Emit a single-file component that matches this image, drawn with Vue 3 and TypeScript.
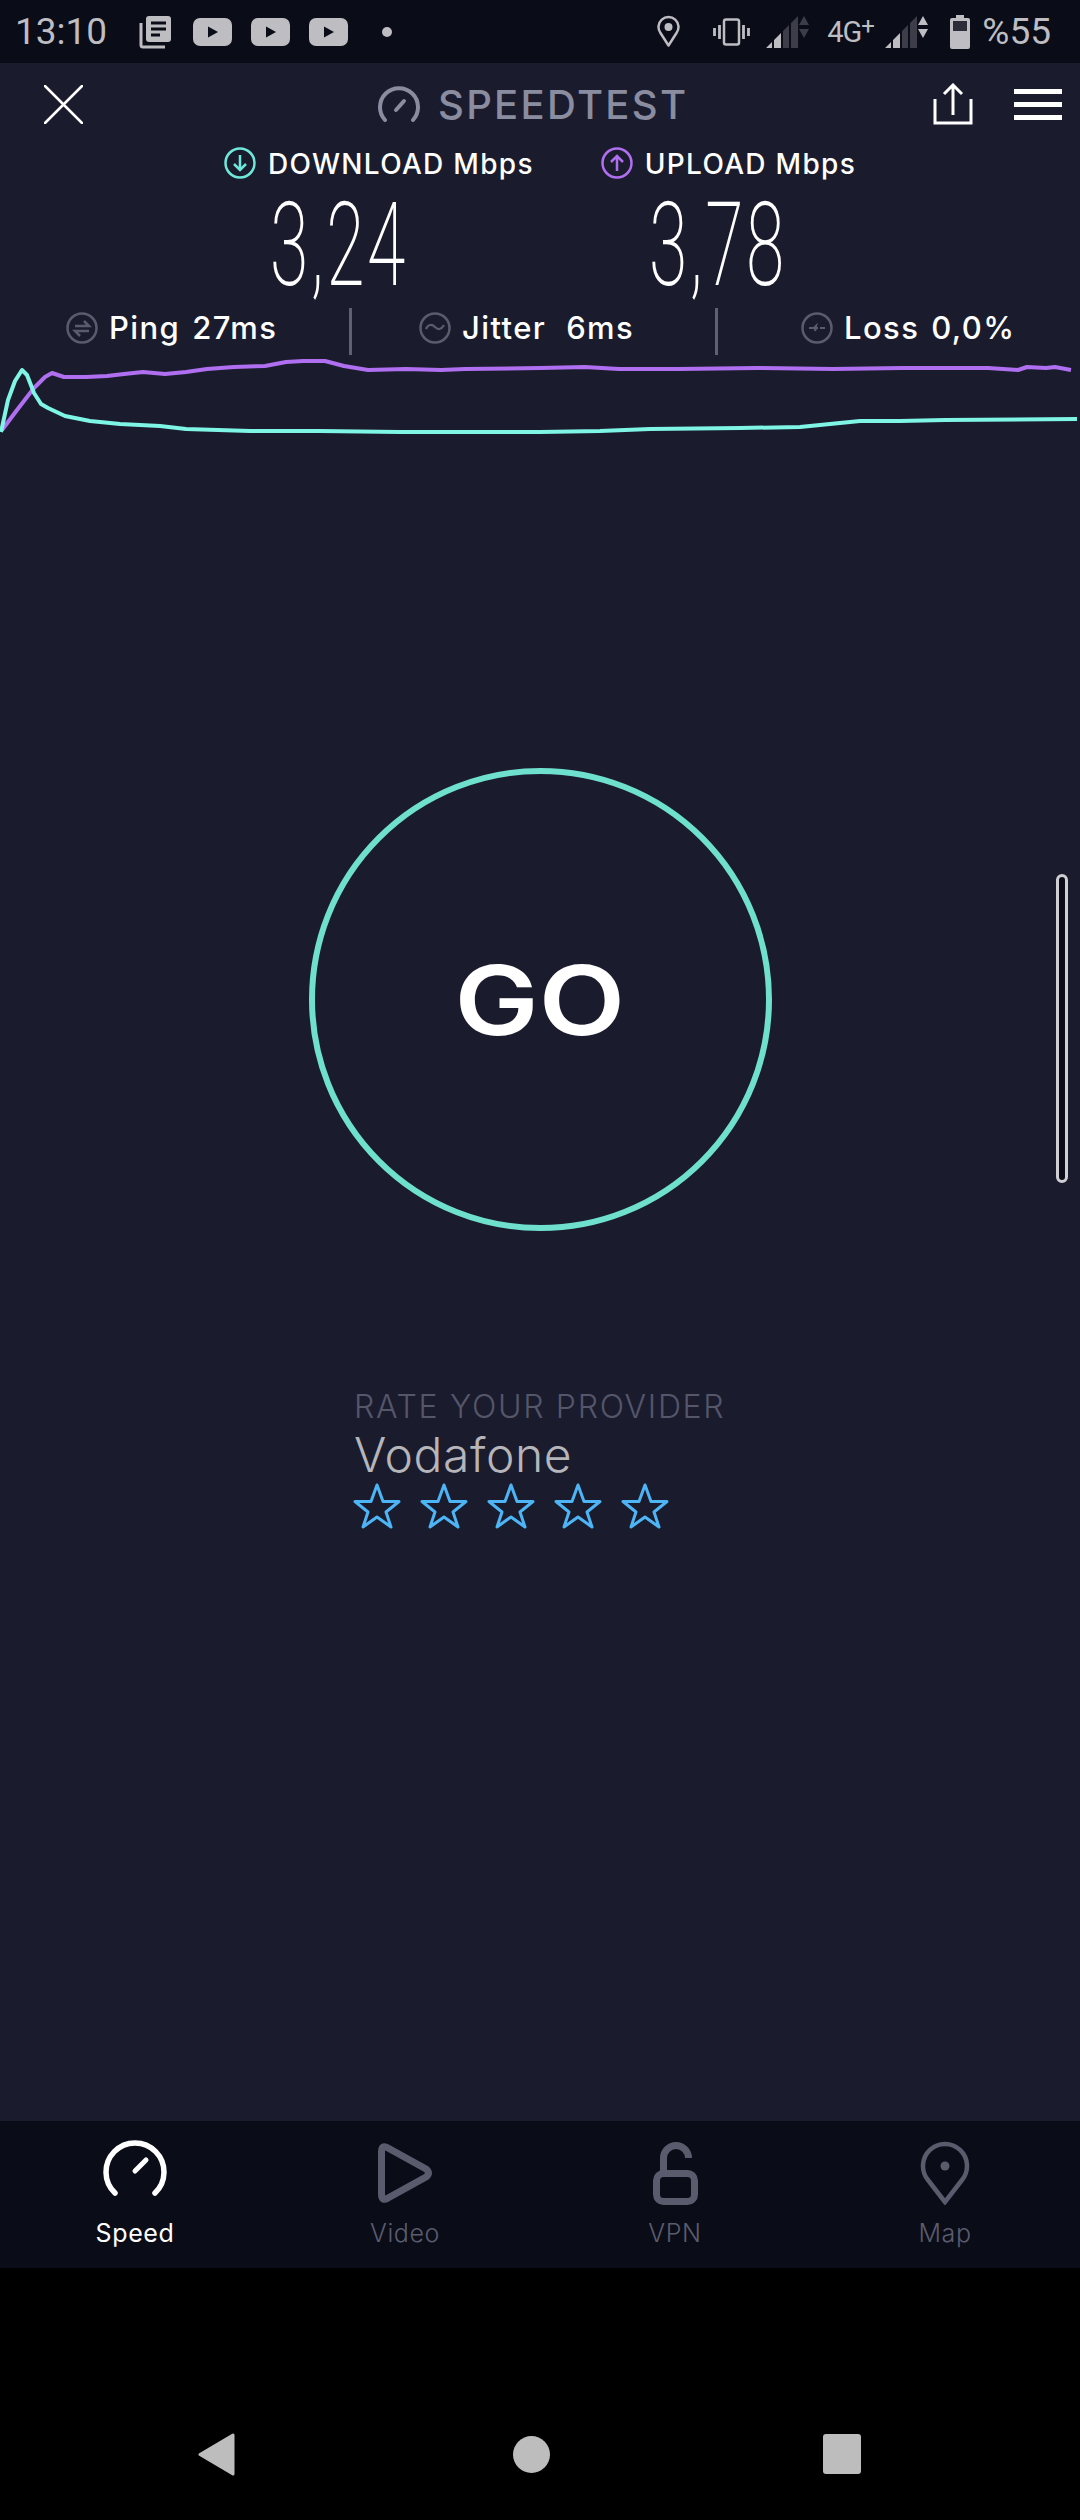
<script setup lang="ts">
type Pt = [number, number]

// chart traces, x in px / y in px of the full screen
const purple: Pt[] = [
  [2, 430], [17, 410], [34, 388], [45, 377], [52, 373], [64, 377], [86, 377], [107, 376],
  [124, 374], [143, 372], [165, 374], [186, 372], [207, 369], [234, 367], [265, 366], [286, 362],
  [303, 361], [325, 361], [344, 366], [368, 370], [406, 369], [441, 370], [465, 369], [540, 368],
  [585, 367], [619, 369], [678, 369], [757, 368], [833, 369], [902, 368], [988, 368], [1018, 370],
  [1027, 367], [1046, 368], [1055, 367], [1071, 370]
]
const cyan: Pt[] = [
  [1, 432], [8, 400], [15, 381], [22, 370], [27, 375], [34, 393], [41, 404], [48, 408],
  [65, 416], [90, 421], [120, 424], [160, 426], [186, 429], [250, 431], [320, 431], [400, 432],
  [540, 432], [600, 431], [650, 429], [740, 428], [800, 427], [820, 425], [860, 421], [900, 421],
  [945, 420], [1077, 419]
]
const toPoints = (pts: Pt[]) => pts.map(([x, y]) => `${x},${y}`).join(' ')
const stars = [1, 2, 3, 4, 5]
const stats = [
  { name: 'Ping', value: '27ms', cls: 'ping', gap: 'small' },
  { name: 'Jitter', value: '6ms', cls: 'jitter', gap: 'big' },
  { name: 'Loss', value: '0,0%', cls: 'loss', gap: 'small' }
]
</script>

<template>
  <div class="screen">
    <div class="statusbar">
      <span class="time">13:10</span>
      <svg class="news" width="33" height="34" viewBox="0 0 33 34">
        <rect x="7" y="1" width="25" height="26" rx="3" fill="#bdbdc2" />
        <path d="M12 8h15M12 14h15M12 20h9" stroke="#0a0c18" stroke-width="3" />
        <path d="M2 8v22a2 2 0 0 0 2 2h22" fill="none" stroke="#bdbdc2" stroke-width="3" />
      </svg>
      <svg v-for="n in 3" :key="n" class="yt" width="39" height="28" viewBox="0 0 39 28">
        <rect width="39" height="28" rx="7" fill="#bdbdc2" />
        <path d="M15 8.500v11l10-5.500z" fill="#0a0c18" />
      </svg>
      <span class="dot"></span>
      <div class="status-right">
        <svg width="23" height="33" viewBox="0 0 23 33">
          <path d="M11.500 30.500L3.500 18A10 10 0 1 1 19.500 18Z" fill="none" stroke="#bdbdc2" stroke-width="2.500" stroke-linejoin="round" />
          <circle cx="11.500" cy="12" r="4" fill="#bdbdc2" />
        </svg>
        <svg class="vib" width="37" height="28" viewBox="0 0 37 28">
          <rect x="11" y="1.500" width="15" height="25" rx="2" fill="none" stroke="#bdbdc2" stroke-width="2.500" />
          <path d="M6.500 7v14M1.500 10v8M30.500 7v14M35.500 10v8" stroke="#bdbdc2" stroke-width="2.800" />
        </svg>
        <svg class="sig1" width="44" height="33" viewBox="0 0 44 33">
          <path d="M0 33l6-6v6zM8 25l7-7v15H8z" fill="#bdbdc2" />
          <path d="M17 16l6-6v23h-6zM25 8l7-7v32h-7z" fill="#3c3d48" />
          <path d="M38 1l5 9H33zM33 14h10l-5 9z" fill="#3c3d48" />
        </svg>
        <span class="net">4G<sup>+</sup></span>
        <svg class="sig2" width="44" height="33" viewBox="0 0 44 33">
          <path d="M0 33l6-6v6zM8 25l7-7v15H8z" fill="#bdbdc2" />
          <path d="M17 16l6-6v23h-6zM25 8l7-7v32h-7z" fill="#3c3d48" />
          <path d="M38 1l5 9H33zM33 14h10l-5 9z" fill="#bdbdc2" />
        </svg>
        <svg class="batt" width="20" height="34" viewBox="0 0 20 34">
          <path d="M6 0h8v3h4a2 2 0 0 1 2 2v27a2 2 0 0 1-2 2H2a2 2 0 0 1-2-2V5a2 2 0 0 1 2-2h4z" fill="#bdbdc2" />
          <rect x="3" y="6" width="14" height="10" fill="#2c2d38" />
        </svg>
        <span class="pct">%55</span>
      </div>
    </div>

    <div class="page">
      <div class="header">
        <svg class="close" width="39" height="39" viewBox="0 0 39 39">
          <path d="M1 1l37 37M38 1L1 38" stroke="#fff" stroke-width="2.500" stroke-linecap="round" />
        </svg>
        <div class="brand">
          <svg width="42" height="36" viewBox="0 0 42 36">
            <path d="M7 34A19 19 0 1 1 35 34" fill="none" stroke="#8a8ca0" stroke-width="4" stroke-linecap="round" />
            <path d="M18 24l8-9" stroke="#8a8ca0" stroke-width="4" stroke-linecap="round" />
          </svg>
          <span>SPEEDTEST</span>
        </div>
        <svg class="share" width="40" height="42" viewBox="0 0 40 42">
          <path d="M2 16v24h36V16" fill="none" stroke="#fff" stroke-width="3" />
          <path d="M20 32V3M11 11l9-9 9 9" fill="none" stroke="#fff" stroke-width="3" />
        </svg>
        <div class="burger"><i></i><i></i><i></i></div>
      </div>

      <div class="labels">
        <div class="label">
          <svg width="32" height="32" viewBox="0 0 32 32">
            <circle cx="16" cy="16" r="14.500" fill="none" stroke="#6fe8da" stroke-width="2.500" />
            <path d="M16 8v15M10 17l6 6 6-6" fill="none" stroke="#6fe8da" stroke-width="2.500" />
          </svg>
          <span>DOWNLOAD Mbps</span>
        </div>
        <div class="label">
          <svg width="32" height="32" viewBox="0 0 32 32">
            <circle cx="16" cy="16" r="14.500" fill="none" stroke="#b06ff0" stroke-width="2.500" />
            <path d="M16 24V9M10 15l6-6 6 6" fill="none" stroke="#b06ff0" stroke-width="2.500" />
          </svg>
          <span>UPLOAD Mbps</span>
        </div>
      </div>

      <div class="numbers">
        <span class="num">3,24</span>
        <span class="num">3,78</span>
      </div>

      <div class="stats">
        <div v-for="s in stats" :key="s.name" class="stat" :class="s.cls">
          <svg width="32" height="32" viewBox="0 0 32 32">
            <circle cx="16" cy="16" r="14.500" fill="none" stroke="#5a5c6e" stroke-width="2.500" />
            <path v-if="s.cls === 'ping'" d="M9 14h14l-5-5M23 19H9l5 5" fill="none" stroke="#5a5c6e" stroke-width="2.500" />
            <path v-else-if="s.cls === 'jitter'" d="M7 17c2-5 6-5 9-2s6 3 9-2" fill="none" stroke="#5a5c6e" stroke-width="2.200" />
            <path v-else d="M8 16h5l2-2-1 5 1-3h2M19 16h5" fill="none" stroke="#5a5c6e" stroke-width="2.200" />
          </svg>
          <span class="stat-name">{{ s.name }}</span>
          <span class="stat-val" :class="s.gap">{{ s.value }}</span>
        </div>
      </div>

      <svg class="chart" width="1080" height="80" viewBox="0 356 1080 80">
        <polyline :points="toPoints(purple)" fill="none" stroke="#b06ff0" stroke-width="4" stroke-linejoin="round" />
        <polyline :points="toPoints(cyan)" fill="none" stroke="#7ff5e6" stroke-width="4" stroke-linejoin="round" />
      </svg>

      <div class="go-wrap">
        <div class="go"><span>GO</span></div>
      </div>

      <div class="rate">
        <div class="rate-title">RATE YOUR PROVIDER</div>
        <div class="provider">Vodafone</div>
        <div class="stars">
          <svg v-for="n in stars" :key="n" width="48" height="46" viewBox="0 0 48 46">
            <path d="M24 2l6 16.500h16L33 29l5 15-14-10-14 10 5-15L2 18.500h16z" fill="none" stroke="#4db5f5" stroke-width="3" stroke-linejoin="round" />
          </svg>
        </div>
      </div>

      <div class="scrollbar"></div>
    </div>

    <div class="tabbar">
      <div class="tab active">
        <svg width="64" height="65" viewBox="0 0 64 65">
          <path d="M12 53A29 29 0 1 1 52 53" fill="none" stroke="#fff" stroke-width="5.500" stroke-linecap="round" />
          <path d="M32 31l11-11" stroke="#fff" stroke-width="5" stroke-linecap="round" />
        </svg>
        <span>Speed</span>
      </div>
      <div class="tab">
        <svg width="56" height="65" viewBox="0 -3 56 65">
          <path d="M4.500 9Q4.500 1 11 5L49 26Q54 30 49 34L11 55Q4.500 59 4.500 51Z" fill="none" stroke="#5a5c6e" stroke-width="7" stroke-linejoin="round" />
        </svg>
        <span>Video</span>
      </div>
      <div class="tab">
        <svg width="45" height="65" viewBox="0 -2 45 65">
          <path d="M10.500 30V16a12.500 12.500 0 0 1 25 0" fill="none" stroke="#5a5c6e" stroke-width="7" />
          <rect x="3.500" y="31.500" width="38" height="28" rx="7" fill="none" stroke="#5a5c6e" stroke-width="7" />
        </svg>
        <span>VPN</span>
      </div>
      <div class="tab">
        <svg width="50" height="65" viewBox="0 -2 50 65">
          <path d="M25 60L8 38A22 22 0 1 1 42 38Z" fill="none" stroke="#5a5c6e" stroke-width="4.500" stroke-linejoin="miter" />
          <circle cx="25" cy="24" r="4.500" fill="#5a5c6e" />
        </svg>
        <span>Map</span>
      </div>
    </div>

    <div class="navbar">
      <svg width="37" height="43" viewBox="0 0 37 43">
        <path d="M35 2v39L2 21.500z" fill="#bdbdbd" stroke="#bdbdbd" stroke-width="3" stroke-linejoin="round" />
      </svg>
      <span class="home"></span>
      <span class="recent"></span>
    </div>
  </div>
</template>

<style>
html,
body {
  margin: 0;
  background: #000;
}
</style>

<style scoped>
.screen {
  width: 1080px;
  height: 2520px;
  display: flex;
  flex-direction: column;
  overflow: hidden;
  font-family: Inter, 'Noto Sans', sans-serif;
  color: #fff;
}

.statusbar {
  height: 63px;
  flex: none;
  display: flex;
  align-items: center;
  padding: 0 29px 0 15px;
  background: #0a0c18;
  color: #bdbdc2;
  font-family: Roboto, sans-serif;
}

.time {
  font-size: 37px;
  width: 92px;
}

.news {
  margin-left: 32px;
  margin-right: 21px;
}

.yt {
  margin-right: 19px;
}

.dot {
  width: 10px;
  height: 10px;
  border-radius: 50%;
  background: #bdbdc2;
  margin-left: 15px;
}

.status-right {
  margin-left: auto;
  display: flex;
  align-items: center;
}

.vib {
  margin-left: 33px;
}

.sig1 {
  margin-left: 16px;
}

.net {
  margin-left: 17px;
  width: 50px;
  font-size: 29px;
  letter-spacing: -1px;
  white-space: nowrap;
}

.net sup {
  font-size: 24px;
  line-height: 0;
  vertical-align: 8px;
}

.sig2 {
  margin-left: 8px;
}

.batt {
  margin-left: 21px;
}

.pct {
  margin-left: 12px;
  font-size: 37px;
}

.page {
  flex: none;
  height: 2058px;
  position: relative;
  background: #1a1c2e;
}

.header {
  height: 82px;
  display: flex;
  align-items: center;
  padding: 0 18px 0 44px;
}

.brand {
  display: flex;
  align-items: center;
  gap: 18px;
  margin-left: 295px;
  color: #8a8ca0;
  font-size: 40px;
  font-weight: 500;
  letter-spacing: 2.300px;
}

.share {
  margin-left: auto;
}

.burger {
  margin-left: 41px;
  width: 48px;
  display: flex;
  flex-direction: column;
  gap: 8px;
}

.burger i {
  display: block;
  height: 5px;
  background: #fff;
}

.labels {
  height: 36px;
  display: flex;
  justify-content: center;
  gap: 67px;
}

.label {
  display: flex;
  align-items: center;
  gap: 12px;
  font-size: 28px;
  font-weight: 500;
  letter-spacing: 1.300px;
}

.label span {
  padding-top: 2px;
}

.numbers {
  display: flex;
  gap: 179px;
  padding-left: 230px;
  height: 127px;
  align-items: center;
}

.num {
  width: 200px;
  text-align: center;
  font-family: Roboto, sans-serif;
  font-weight: 200;
  font-size: 116px;
  line-height: 116px;
  letter-spacing: 4px;
  transform: scaleX(0.6);
}

.stats {
  display: flex;
  height: 47px;
  margin-bottom: 1px;
}

.stat {
  display: flex;
  align-items: center;
  font-size: 31px;
  font-weight: 500;
  letter-spacing: 1.400px;
  box-sizing: border-box;
  padding-bottom: 8px;
}

.stat svg {
  margin-right: 11px;
}

.stat.ping {
  width: 352px;
  padding-left: 66px;
  border-right: 3px solid #5f6070;
}

.stat.jitter {
  width: 366px;
  padding-left: 67px;
  border-right: 3px solid #5f6070;
}

.stat.loss {
  padding-left: 83px;
}

.stat-val.small {
  margin-left: 12px;
}

.stat-val.big {
  margin-left: 20px;
}

.chart {
  display: block;
}

.go-wrap {
  display: flex;
  justify-content: center;
  margin-top: 332px;
}

.go {
  width: 463px;
  height: 463px;
  box-sizing: border-box;
  border: 6px solid #6fe0cd;
  border-radius: 50%;
  display: flex;
  align-items: center;
  justify-content: center;
  font-size: 96px;
  font-weight: 600;
}

.go span {
  display: inline-block;
  transform: scaleX(1.17);
}

.rate {
  margin: 156px 0 0 354px;
}

.rate-title {
  font-size: 32px;
  font-weight: 300;
  line-height: 40px;
  letter-spacing: 1.700px;
  color: #55566a;
}

.provider {
  font-size: 48px;
  font-weight: 300;
  line-height: 56px;
  letter-spacing: 0.600px;
  color: #b5b5ba;
}

.stars {
  display: flex;
  gap: 19px;
  margin: 0 0 0 -1px;
}

.stars svg {
  display: block;
}

.scrollbar {
  position: absolute;
  left: 1056px;
  top: 811px;
  width: 12px;
  height: 309px;
  box-sizing: border-box;
  border: 3px solid #cfcfd4;
  border-radius: 6px;
  background: #0a0c18;
}

.tabbar {
  height: 147px;
  flex: none;
  display: grid;
  grid-template-columns: repeat(4, 270px);
  background: #0a0c18;
}

.tab {
  display: flex;
  flex-direction: column;
  align-items: center;
  padding-top: 19px;
  color: #5a5c6e;
  font-size: 25px;
  font-weight: 300;
  letter-spacing: 0.600px;
}

.tab svg {
  display: block;
  margin-bottom: 13px;
}

.tab.active {
  color: #fff;
  font-weight: 400;
}

.navbar {
  flex: 1;
  background: #000;
  display: flex;
  align-items: center;
  padding: 120px 0 0 198px;
}

.home {
  width: 37px;
  height: 37px;
  border-radius: 50%;
  background: #bdbdbd;
  margin-left: 278px;
}

.recent {
  width: 38px;
  height: 40px;
  border-radius: 3px;
  background: #bdbdbd;
  margin-left: 273px;
}
</style>
